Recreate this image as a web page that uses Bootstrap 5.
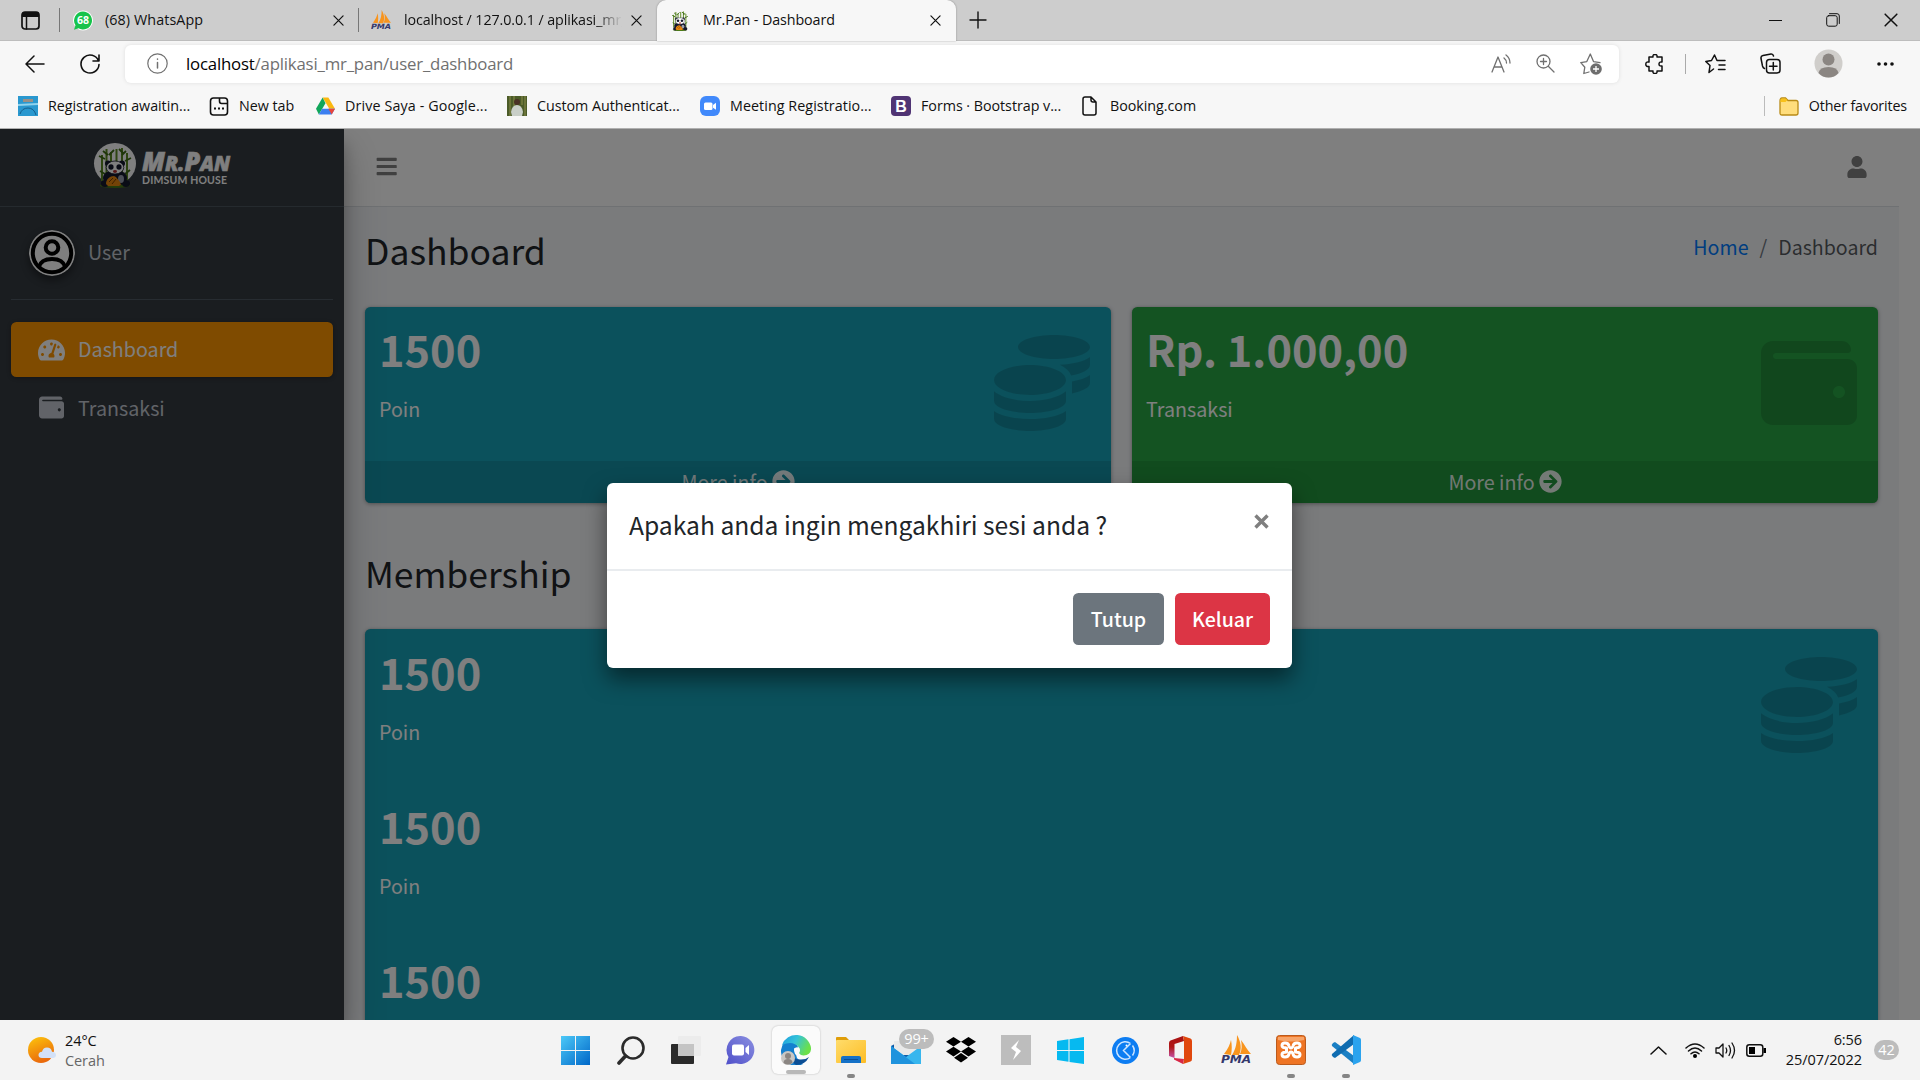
<!DOCTYPE html>
<html lang="id">
<head>
<meta charset="utf-8">
<title>Mr.Pan - Dashboard</title>
<link href="https://cdn.jsdelivr.net/npm/bootstrap@5.3.0/dist/css/bootstrap.min.css" rel="stylesheet">
<style>
html,body{height:100%}
body{width:1920px;height:1080px;overflow:hidden;font-family:"Noto Sans CJK SC","Noto Sans",sans-serif;font-size:19.7px;line-height:33px;color:#212529;background:#fff}
svg{display:block;flex:none}
.ui{font-family:"Open Sans","Noto Sans",sans-serif;color:#111}
.ln{fill:none;stroke:currentColor;stroke-linecap:round;stroke-linejoin:round}
/* browser frame */
.tabstrip{height:40px;background:#cdcdcd;font-size:14.3px;letter-spacing:-.1px}
.tabstrip .sep{width:1px;height:24px;background:#777}
.tab-item{height:40px;white-space:nowrap;overflow:hidden}
.tab-item span,.address>span{padding-bottom:2px}
.tab-live{background:#f7f7f7;border-radius:9px 9px 0 0;width:299px;box-shadow:0 0 2px rgba(0,0,0,.35);height:41px}
.fade-end{-webkit-mask-image:linear-gradient(90deg,#000 88%,transparent);mask-image:linear-gradient(90deg,#000 88%,transparent)}
.toolbar{height:48px;background:#f7f7f7;border-top:1px solid #bdbdbd;padding-bottom:2px}
.address{width:1494px;height:38px;background:#fff;border-radius:6px;box-shadow:0 0 4px rgba(0,0,0,.1);font-size:16.8px;letter-spacing:-.19px;color:#707070}
.favbar{height:41px;background:#f7f7f7;border-bottom:1px solid #b0b0b0;font-size:14.3px;letter-spacing:-.04px;white-space:nowrap}
.fav svg{margin-right:10px}
.fav span{padding-bottom:2px}
/* page */
.page{height:891px;overflow:hidden;background:#fff}
.side{width:344px;background:#343a40;color:#c2c7d0;box-shadow:0 19px 38px rgba(0,0,0,.25),0 14px 14px rgba(0,0,0,.22);z-index:2}
.side span{padding-bottom:2px}
.brand{height:78px;border-bottom:1px solid #4b545c}
.user-panel{margin:0 11px;height:93px;border-bottom:1px solid #4f5962}
.avatar{border-radius:50%;box-shadow:0 4px 8px rgba(0,0,0,.45)}
.side-link{margin:0 11px;height:55px;padding-left:27px;border-radius:5.5px;color:#c2c7d0}
.side-link.on{background:#ff9600;color:#fff;box-shadow:0 1px 4px rgba(0,0,0,.3)}
.main{width:1555px;background:#f4f6f9}
.topnav{height:78px;background:#fff;border-bottom:1px solid #dee2e6;padding:0 32px 2px}
.head-row{padding:21px 21px 31px}
.head-row h1{font-size:35.5px;line-height:44.5px;margin:0 0 3px;font-weight:400}
.crumb{--bs-breadcrumb-divider-color:#6c757d;--bs-breadcrumb-item-padding-x:11px;margin:2px 0 0;font-size:19.6px}
.crumb a{color:#007bff;text-decoration:none}
.tiles{padding:0 21px;gap:21px}
.box{border-radius:5.5px;color:#fff;box-shadow:0 0 1px rgba(0,0,0,.13),0 1px 4px rgba(0,0,0,.35);overflow:hidden;margin-bottom:27px}
.box.info{background:#17a2b8}.box.good{background:#28a745}
.box .inner{padding:13.75px 14px;height:154px}
.box h3{font-size:43.3px;line-height:56.5px;margin:0 0 15.25px;font-weight:700}
.box p{margin:0;line-height:33px}
.pic{position:absolute;right:21px;top:28px;fill:rgba(0,0,0,.15)}
.more{height:42px;background:rgba(0,0,0,.1);color:rgba(255,255,255,.9)}
.shade{position:absolute;inset:0;background:rgba(0,0,0,.5);z-index:5}
.dlg{position:absolute;left:607px;top:354px;width:685px;z-index:6}
.dlg .modal-content{height:185px;border:0;border-radius:6px;background:#fff;box-shadow:0 11px 22px rgba(0,0,0,.5);color:#212529}
.dlg .modal-header{height:88px;padding:21px 22px;border-bottom:2px solid #e9ecef}
.dlg .modal-title{font-size:24.65px;line-height:40px;font-weight:400}
.dlg .btn{font-size:19.6px;line-height:33px;height:52px;padding:9px 0 10px;border-radius:5.5px;border:0;font-weight:500;margin:0}
.dlg .btn-secondary{background:#6c757d}.dlg .btn-danger{background:#dc3545}
.dlg .modal-footer{border:0;padding:22px;gap:11px}
/* taskbar */
.taskbar{height:60px;background:#f3f3f3;font-size:14.5px;line-height:20px;letter-spacing:-.08px}
.cell{width:55px;height:60px}
.tile{width:48px;height:48px;background:#fbfbfb;border-radius:6px;box-shadow:0 0 2px rgba(0,0,0,.25)}
.run{position:absolute;left:50%;bottom:2px;height:4px;border-radius:2px;transform:translateX(-50%);background:#858585;width:8px}
.pill{background:#bcbcbc;color:#fff;border-radius:10px;height:20px;line-height:20px;text-align:center}
</style>
<script src="https://cdn.jsdelivr.net/npm/bootstrap@5.3.0/dist/js/bootstrap.bundle.min.js"></script>
</head>
<body class="d-flex flex-column">
<svg width="0" height="0" class="position-absolute">
 <defs>
  <linearGradient id="gBlue" x1="0" y1="0" x2="1" y2="1"><stop offset="0" stop-color="#4cc9f8"/><stop offset="1" stop-color="#0067c8"/></linearGradient>
  <linearGradient id="gSun" x1="0" y1="0" x2=".4" y2="1"><stop offset="0" stop-color="#fdc60c"/><stop offset="1" stop-color="#ea6a0c"/></linearGradient>
  <linearGradient id="gChat" x1="0" y1="1" x2="1" y2="0"><stop offset="0" stop-color="#4f4fc9"/><stop offset="1" stop-color="#8a8fe0"/></linearGradient>
  <linearGradient id="gEdge" x1="0" y1="0" x2="1" y2=".4"><stop offset="0" stop-color="#1a9be0"/><stop offset=".5" stop-color="#35c3d9"/><stop offset="1" stop-color="#6be04a"/></linearGradient>
  <linearGradient id="gFold" x1="0" y1="0" x2="1" y2="1"><stop offset="0" stop-color="#ffdc6b"/><stop offset="1" stop-color="#fdbd25"/></linearGradient>
  <linearGradient id="gOff" x1="0" y1="1" x2="0" y2="0"><stop offset="0" stop-color="#c452a8"/><stop offset=".5" stop-color="#b01818"/><stop offset="1" stop-color="#a81212"/></linearGradient>
  <symbol id="coins" viewBox="0 0 512 512"><path d="M0 405.3V448c0 35.3 86 64 192 64s192-28.700 192-64v-42.700C342.700 434.400 267.200 448 192 448S41.300 434.400 0 405.300zM320 128c106 0 192-28.700 192-64S426 0 320 0 128 28.700 128 64s86 64 192 64zM0 300.400V352c0 35.300 86 64 192 64s192-28.700 192-64v-51.600c-41.300 34-116.900 51.600-192 51.600S41.300 334.400 0 300.400zm416 11c57.300-11.100 96-31.700 96-55.400v-42.700c-23.200 16.400-57.300 27.600-96 34.500v63.600zM192 160C86 160 0 195.800 0 240s86 80 192 80 192-35.800 192-80-86-80-192-80zm219.300 56.300c60-10.800 100.700-32 100.700-56.300v-42.700c-35.500 25.100-96.500 38.600-160.700 41.800 29.500 14.300 51.200 33.500 60 57.200z"/></symbol>
  <symbol id="wallet" viewBox="0 0 512 512"><path d="M461.2 128H80c-8.840 0-16-7.160-16-16s7.160-16 16-16h384c8.840 0 16-7.160 16-16 0-26.510-21.490-48-48-48H64C28.650 32 0 60.650 0 96v320c0 35.350 28.650 64 64 64h397.200c28.020 0 50.800-21.530 50.800-48V176c0-26.470-22.780-48-50.800-48zM416 336c-17.670 0-32-14.330-32-32s14.330-32 32-32 32 14.330 32 32-14.330 32-32 32z"/></symbol>
  <symbol id="arrow" viewBox="0 0 512 512"><path d="M256 8c137 0 248 111 248 248S393 504 256 504 8 393 8 256 119 8 256 8zm-28.900 143.600l75.500 72.400H120c-13.300 0-24 10.700-24 24v16c0 13.300 10.700 24 24 24h182.600l-75.500 72.400c-9.700 9.300-9.900 24.800-.4 34.300l11 10.900c9.400 9.400 24.600 9.400 33.900 0L404.300 273c9.400-9.400 9.400-24.600 0-33.900L271.600 106.300c-9.400-9.400-24.600-9.400-33.900 0l-11 10.900c-9.500 9.600-9.300 25.100.4 34.400z"/></symbol>
  <symbol id="close" viewBox="0 0 12 12"><path class="ln" stroke-width="1.300" d="M1 1l10 10M11 1L1 11"/></symbol>
  <symbol id="panda" viewBox="0 0 42 45">
   <path d="M8 12v26M12.500 6v32M17 9v30M22.500 6v30M28 5v34M33 10v28" stroke="#5d8a22" stroke-width="2"/>
   <path d="M5 13l6 3M9 8l5 4M20 7l-5 5M25 6l5 5M37 15l-6 3M32 8l-4 4M6 28l5 3M36 27l-5 4" stroke="#3f6d14" stroke-width="1.800"/>
   <ellipse cx="21" cy="42.500" rx="15" ry="2.500" fill="#4c7a17"/>
   <ellipse cx="21" cy="35" rx="12" ry="8" fill="#15182c"/>
   <ellipse cx="11" cy="40.500" rx="4" ry="3.500" fill="#15182c"/><ellipse cx="32" cy="40.500" rx="4" ry="3.500" fill="#15182c"/>
   <circle cx="14" cy="20.500" r="3" fill="#15182c"/><circle cx="28" cy="20.500" r="3" fill="#15182c"/>
   <ellipse cx="21" cy="24.500" rx="8.800" ry="6.500" fill="#fff" stroke="#15182c" stroke-width=".8"/>
   <ellipse cx="17" cy="24" rx="2.600" ry="2.800" fill="#15182c"/><ellipse cx="25" cy="24" rx="2.600" ry="2.800" fill="#15182c"/>
   <ellipse cx="21" cy="28.500" rx="2" ry="1.400" fill="#b03030"/>
   <ellipse cx="27" cy="36" rx="3" ry="4" fill="#9aa0b0"/>
   <path d="M12 41c0-5 4-8 8-8 3 1 4 4 6 6l1 3-2 1H14z" fill="#e8870f"/><path d="M15 39l4-4M18 41l4-5" stroke="#7b3f00"/>
  </symbol>
  <symbol id="pma" viewBox="0 0 30 30"><path d="M3 19C7 14 9 9 10 5c1 5 1 10 0 15zM11 20c4-6 5-13 5-20 4 7 5 14 2 20zM19 19c2-4 2-9 1-14 4 5 6 10 10 14z" fill="#f8941d"/><text x="0" y="28" textLength="30" lengthAdjust="spacingAndGlyphs" font-family="DejaVu Sans" font-weight="700" font-style="italic" font-size="11" fill="#34386b">PMA</text></symbol>
 </defs>
</svg>

<header class="ui">
 <div class="tabstrip d-flex align-items-center">
  <svg width="19" height="19" viewBox="0 0 19 19" style="margin-left:21px"><rect class="ln" x="1" y="1" width="17" height="17" rx="3" stroke-width="1.700"/><path d="M1 3q0-2 2-2h13q2 0 2 2v3H1z" fill="#111"/><path d="M5.500 6v12" class="ln" stroke-width="1.500"/></svg>
  <span class="sep" style="margin-left:19px"></span>
  <div class="tab-item d-flex align-items-center" style="width:298px;padding-left:13px">
   <svg width="20" height="21" viewBox="0 0 20 21"><circle cx="10" cy="10.500" r="10" fill="#fff"/><path d="M10 1.500a9 9 0 1 1-4.500 16.800L1 19.800l1.500-4.500A9 9 0 0 1 10 1.500z" fill="#17c34b"/><text x="10" y="14.200" text-anchor="middle" font-family="Open Sans" font-weight="700" font-size="10.500" fill="#fff">68</text></svg>
   <span class="flex-grow-1" style="padding-left:12px;letter-spacing:.1px">(68) WhatsApp</span>
   <svg width="11" height="11" style="margin-right:14px"><use href="#close"/></svg>
  </div>
  <span class="sep"></span>
  <div class="tab-item d-flex align-items-center" style="width:298px;padding-left:12px">
   <svg width="20" height="20"><use href="#pma"/></svg>
   <span class="fade-end overflow-hidden" style="margin-left:13px;width:218px">localhost / 127.0.0.1 / aplikasi_mr_pan</span>
   <svg width="11" height="11" style="margin-left:9px"><use href="#close"/></svg>
  </div>
  <div class="tab-live tab-item d-flex align-items-center">
   <svg width="18" height="21" viewBox="4 2 34 43" style="margin-left:14px"><use href="#panda" width="42" height="45"/></svg>
   <span class="flex-grow-1" style="padding-left:14px">Mr.Pan - Dashboard</span>
   <svg width="11" height="11" style="margin-right:15px"><use href="#close"/></svg>
  </div>
  <svg width="18" height="18" style="margin-left:13px" viewBox="0 0 18 18"><path class="ln" stroke-width="1.400" d="M9 1v16M1 9h16"/></svg>
  <div class="d-flex align-items-center ms-auto" style="gap:44px;margin-right:22px">
   <svg width="13" height="13"><path d="M0 6.500h13" stroke="#111"/></svg>
   <svg width="14" height="14" viewBox="0 0 14 14"><rect class="ln" x=".7" y="2.700" width="10.500" height="10.500" rx="2"/><path class="ln" d="M3.500.7H11q2.300 0 2.300 2.300v7.500"/></svg>
   <svg width="14" height="14"><use href="#close"/></svg>
  </div>
 </div>
 <div class="toolbar d-flex align-items-center">
  <svg width="20" height="18" viewBox="0 0 20 18" style="margin-left:25px"><path class="ln" stroke-width="1.500" d="M19 9H1M9 1L1 9l8 8"/></svg>
  <svg width="20" height="21" viewBox="0 0 20 21" style="margin:0 25px 0 35px"><path class="ln" stroke-width="1.600" d="M18.500 8A9 9 0 1 0 19 11.500M19 2v6h-6"/></svg>
  <div class="address d-flex align-items-center">
   <svg width="21" height="21" viewBox="0 0 21 21" style="margin:0 18px 0 22px"><circle class="ln" cx="10.500" cy="10.500" r="9.700" stroke-width="1.200"/><path class="ln" stroke-width="1.500" d="M10.500 9.500v5.500M10.500 6v.2"/></svg>
   <span style="padding-bottom:1px"><span class="text-black">localhost</span>/aplikasi_mr_pan/user_dashboard</span>
   <div class="d-flex align-items-center ms-auto" style="gap:25px;margin-right:17px">
    <svg width="20" height="20" viewBox="0 0 20 20"><path class="ln" stroke-width="1.300" d="M1 18L7 3l6 15M3.200 13h7.600M13 4q2.500 2 2.500 5M15 1q4 3 4 8"/></svg>
    <svg width="19" height="19" viewBox="0 0 19 19"><path class="ln" stroke-width="1.300" d="M12.500 12.500l5.500 5.500M7.500 4.500v6M4.500 7.500h6"/><circle class="ln" cx="7.500" cy="7.500" r="6.500" stroke-width="1.300"/></svg>
    <svg width="22" height="22" viewBox="0 0 22 22"><path class="ln" stroke-width="1.300" d="M9 19l-5.200 1.500 1-6.300L.8 9.600l6-1L10.300 1l3.200 7.600 6.500 1"/><circle cx="16" cy="16" r="5.800" fill="#6d6d6d"/><path d="M16 13v6M13 16h6" stroke="#fff" stroke-width="1.300"/></svg>
   </div>
  </div>
  <svg width="20" height="20" viewBox="0 0 20 20" style="margin-left:26px"><path class="ln" stroke-width="1.500" d="M4 3h4q-.5-2.500 2-2.500T12 3h5v5q-3-.5-3 2t3 2v5h-5q.5 2.500-2 2.500T8 17H4v-4.500Q.8 13 .8 10.200T4 8z"/></svg>
  <svg width="1" height="20" style="margin:0 19px 0 20px"><path d="M.5 0v20" stroke="#aaa"/></svg>
  <svg width="21" height="20" viewBox="0 0 21 20"><path class="ln" stroke-width="1.500" d="M8.500 15L4 18.500l1-7L.8 7.500l5.700-1L9.500 1l2.500 5.500h8M14 11h6M13.500 15.500H20"/></svg>
  <svg width="21" height="21" viewBox="0 0 21 21" style="margin-left:34px"><rect class="ln" x="6.500" y="6.500" width="13.500" height="13.500" rx="3" stroke-width="1.500"/><path class="ln" stroke-width="1.500" d="M13.300 9.500v7.500M9.500 13.300H17M4.500 15.500Q3 15 2.500 13L1 5.500Q.6 3 3 2.500L11 1q2-.2 2.500 2"/></svg>
  <svg width="29" height="29" viewBox="0 0 29 29" style="margin-left:33px"><circle cx="14.500" cy="14.500" r="14" fill="#d0cecb"/><circle cx="14.500" cy="10.500" r="6" fill="#8b8682"/><path d="M4.500 24q1-6 10-6t10 6q-4 4.500-10 4.500T4.500 24z" fill="#8b8682"/></svg>
  <svg width="17" height="4" style="margin-left:34px"><g fill="#111"><circle cx="2" cy="2" r="1.800"/><circle cx="8.500" cy="2" r="1.800"/><circle cx="15" cy="2" r="1.800"/></g></svg>
 </div>
 <div class="favbar d-flex align-items-center" style="padding:0 13px 4px 18px">
  <div class="fav d-flex align-items-center" style="width:191px"><svg width="20" height="20"><path fill="#2a98cf" d="M0 0h20v20H0z"/><path fill="#9a8f86" d="M5 3h10v3H5z"/><path d="M0 8l20-1v2L0 10z" fill="#8fd3ee"/><path d="M2 18q2-6 8-6t8 7" stroke="#145f8d" fill="none"/></svg><span>Registration awaitin...</span></div>
  <div class="fav d-flex align-items-center" style="width:107px"><svg width="20" height="19" viewBox="0 0 19 19"><path class="ln" stroke-width="1.600" d="M10 1H4Q1 1 1 4v11q0 3 3 3h11q3 0 3-3V6.500h-6Q10 6.500 10 4zM10 1h5q3 0 3 3v3"/><path d="M4.500 11.500h2M8.500 11.500h2M12.500 11.500h2" stroke="#111" stroke-width="2"/></svg><span>New tab</span></div>
  <div class="fav d-flex align-items-center" style="width:191px;letter-spacing:.12px"><svg width="19" height="18" viewBox="0 0 20 18"><path d="M7 0h6l7 12h-6z" fill="#fbb80f"/><path d="M7 0l3 6-7 12-3-6z" fill="#11a65a"/><path d="M3 18l3.500-6H20l-3.500 6z" fill="#3c7ff0"/><path d="M20 12l-3.500 6-3.500-6z" fill="#e8453c"/></svg><span>Drive Saya - Google...</span></div>
  <div class="fav d-flex align-items-center" style="width:193px"><svg width="20" height="20"><path fill="#4b5b28" d="M0 0h20v20H0z"/><path d="M3 0v20M7 0v10M15 0v9M18 0v20" stroke="#8b8d4a"/><circle cx="10" cy="6" r="3" fill="#4a3226"/><path d="M4 16q1-7 6-7t6 7l-1 4H5z" fill="#c9cfc8"/></svg><span>Custom Authenticat...</span></div>
  <div class="fav d-flex align-items-center" style="width:191px;letter-spacing:.06px"><svg width="20" height="20"><rect width="20" height="20" rx="6" fill="#4189fb"/><rect x="4" y="6.500" width="8.500" height="7.500" rx="1.500" fill="#fff"/><path d="M13 9l3-2.300v7L13 11.700z" fill="#fff"/></svg><span>Meeting Registratio...</span></div>
  <div class="fav d-flex align-items-center" style="width:191px"><svg width="20" height="20"><rect width="20" height="20" rx="4" fill="#503474"/><text x="10" y="15.500" text-anchor="middle" font-family="Liberation Sans" font-weight="700" font-size="16" fill="#fff">B</text></svg><span>Forms · Bootstrap v...</span></div>
  <div class="fav d-flex align-items-center"><svg width="15" height="20" viewBox="0 0 15 20" style="margin-right:13px"><path class="ln" stroke-width="1.500" d="M9 1H3Q1 1 1 3v14q0 2 2 2h9q2 0 2-2V6zv3q0 2 2 2h3"/></svg><span>Booking.com</span></div>
  <div class="fav d-flex align-items-center ms-auto" style="letter-spacing:-.15px"><svg width="2" height="20" style="margin-right:13px"><path d="M.5 0v20" stroke="#bbb"/></svg><svg width="20" height="19" viewBox="0 0 20 19"><path d="M1 4Q1 1 3 1h3.500L9 3.500h8q2 0 2 2V16q0 2-2 2H3q-2 0-2-2z" fill="#ffdd7c" stroke="#b98b16" stroke-width="1.300"/><path d="M1.500 5V3Q1.500 1.500 3 1.500h3.500L8.500 3 6.500 5z" fill="#f8c11b"/></svg><span>Other favorites</span></div>
 </div>
</header>

<div class="page d-flex position-relative">
 <aside class="side d-flex flex-column">
  <div class="brand">
   <svg width="344" height="77" viewBox="0 0 344 77"><ellipse cx="115" cy="34.500" rx="21" ry="20.500" fill="#fff"/><use href="#panda" x="94" y="14" width="42" height="45"/><g font-family="Open Sans" fill="#fff"><text x="142" y="42" font-size="26" font-weight="800" font-style="italic" stroke="#fff" stroke-width=".6" textLength="88" lengthAdjust="spacingAndGlyphs">M<tspan font-size="21">R.</tspan>P<tspan font-size="21">AN</tspan></text><text x="142" y="55" font-family="Lato" font-size="10.500" font-weight="700" textLength="85" lengthAdjust="spacing">DIMSUM HOUSE</text></g></svg>
  </div>
  <div class="user-panel d-flex align-items-center" style="padding:0 0 1px 18px"><svg class="avatar" width="46" height="46" viewBox="0 0 46 46"><circle cx="23" cy="23" r="23" fill="#fff"/><g fill="none" stroke="#000" stroke-width="4"><circle cx="23" cy="23" r="19.200"/><circle cx="23" cy="17.500" r="6.300"/><path d="M10 37q2-8 13-8t13 8"/></g></svg><span style="padding-left:13px;padding-bottom:3px">User</span></div>
  <div class="side-link on d-flex align-items-center" style="margin-top:22px"><svg width="27" height="24" viewBox="0 0 576 512" fill="currentColor"><path d="M288 32C128.940 32 0 160.940 0 320c0 52.800 14.250 102.260 39.060 144.800 5.610 9.620 16.300 15.200 27.440 15.200h443c11.140 0 21.830-5.580 27.440-15.200C561.750 422.260 576 372.800 576 320c0-159.060-128.940-288-288-288zm0 64c14.710 0 26.580 10.130 30.320 23.650-1.110 2.260-2.640 4.230-3.450 6.670l-9.220 27.670c-5.130 3.490-10.970 6.010-17.640 6.010-17.670 0-32-14.330-32-32S270.330 96 288 96zM96 384c-17.670 0-32-14.330-32-32s14.330-32 32-32 32 14.330 32 32-14.330 32-32 32zm48-160c-17.670 0-32-14.330-32-32s14.330-32 32-32 32 14.330 32 32-14.330 32-32 32zm246.770-72.410l-61.330 184C343.130 347.330 352 364.540 352 384c0 11.720-3.380 22.550-8.880 32H232.880c-5.500-9.450-8.880-20.280-8.880-32 0-33.940 26.500-61.430 59.900-63.590l61.340-184.010c4.170-12.560 17.730-19.450 30.360-15.170 12.570 4.190 19.350 17.790 15.170 30.360zm14.660 57.200l15.520-46.550c3.470-1.290 7.130-2.230 11.050-2.230 17.670 0 32 14.330 32 32s-14.330 32-32 32c-11.380-.01-20.890-6.280-26.570-15.220zM480 384c-17.670 0-32-14.330-32-32s14.330-32 32-32 32 14.330 32 32-14.330 32-32 32z"/></svg><span style="padding-left:13px">Dashboard</span></div>
  <div class="side-link d-flex align-items-center" style="margin-top:4px;padding-bottom:2px"><svg width="25" height="25" fill="currentColor" style="margin:0 1px"><use href="#wallet"/></svg><span style="padding-left:13px;padding-bottom:0">Transaksi</span></div>
 </aside>

 <main class="main">
  <nav class="topnav d-flex align-items-center justify-content-between">
   <svg width="21" height="23" viewBox="-8 0 456 512" fill="#808080"><path d="M16 132h416c9 0 16-7 16-16V76c0-9-7-16-16-16H16C7 60 0 67 0 76v40c0 9 7 16 16 16zm0 160h416c9 0 16-7 16-16v-40c0-9-7-16-16-16H16c-9 0-16 7-16 16v40c0 9 7 16 16 16zm0 160h416c9 0 16-7 16-16v-40c0-9-7-16-16-16H16c-9 0-16 7-16 16v40c0 9 7 16 16 16z"/></svg>
   <svg width="20" height="22" viewBox="0 0 448 512" fill="#808080"><path d="M224 256c70.700 0 128-57.300 128-128S294.700 0 224 0 96 57.300 96 128s57.300 128 128 128zm89.600 32h-16.700c-22.200 10.200-46.900 16-72.900 16s-50.600-5.800-72.900-16h-16.700C60.200 288 0 348.200 0 422.400V464c0 26.500 21.500 48 48 48h352c26.500 0 48-21.500 48-48v-41.600c0-74.200-60.200-134.400-134.400-134.400z"/></svg>
  </nav>
  <div class="head-row d-flex justify-content-between">
   <h1>Dashboard</h1>
   <ol class="breadcrumb crumb"><li class="breadcrumb-item"><a href="#">Home</a></li><li class="breadcrumb-item active">Dashboard</li></ol>
  </div>
  <div class="tiles d-flex">
   <section class="box info position-relative flex-fill w-50"><div class="inner"><h3>1500</h3><p>Poin</p></div><svg class="pic" width="96" height="96"><use href="#coins"/></svg><div class="more d-flex align-items-center justify-content-center">More info<svg width="23" height="23" fill="currentColor" style="margin-left:4px"><use href="#arrow"/></svg></div></section>
   <section class="box good position-relative flex-fill w-50"><div class="inner"><h3>Rp. 1.000,00</h3><p>Transaksi</p></div><svg class="pic" width="96" height="96"><use href="#wallet"/></svg><div class="more d-flex align-items-center justify-content-center">More info<svg width="23" height="23" fill="currentColor" style="margin-left:4px"><use href="#arrow"/></svg></div></section>
  </div>
  <div class="head-row"><h1>Membership</h1></div>
  <div class="tiles">
   <section class="box info position-relative"><div class="inner"><h3>1500</h3><p>Poin</p></div><div class="inner"><h3>1500</h3><p>Poin</p></div><div class="inner"><h3>1500</h3></div><svg class="pic" width="96" height="96"><use href="#coins"/></svg></section>
  </div>
 </main>
 <div class="shade"></div>
 <div class="dlg">
  <div class="modal-content">
   <div class="modal-header align-items-start"><h4 class="modal-title">Apakah anda ingin mengakhiri sesi anda ?</h4><svg width="15" height="15" viewBox="0 0 15 15" style="margin:10px 1px 0 0"><path d="M1.500 1.500l12 12M13.500 1.500l-12 12" stroke="#7f7f7f" stroke-width="3.400"/></svg></div>
   <div class="modal-footer flex-nowrap"><button class="btn btn-secondary" style="width:91px">Tutup</button><button class="btn btn-danger" style="width:95px">Keluar</button></div>
  </div>
 </div>
</div>

<footer class="taskbar ui d-flex align-items-center">
 <div class="d-flex align-items-center" style="width:548px;padding-left:28px">
  <svg width="29" height="27" viewBox="0 0 29 27"><circle cx="13" cy="13" r="13" fill="url(#gSun)"/><path d="M14 21q-3.500 0-3.500-3t3.500-3.200Q15 10.500 19 10.500t5 4.200q4 .3 4 3.300t-3.500 3z" fill="#d3e1f7"/></svg>
  <div style="padding:1px 0 0 8px">24°C<br><span style="color:#666">Cerah</span></div>
 </div>
 <div class="cell d-flex align-items-center justify-content-center"><svg width="29" height="29"><path d="M0 0h14v14H0zM15 0h14v14H15zM0 15h14v14H0zM15 15h14v14H15z" fill="url(#gBlue)"/></svg></div>
 <div class="cell d-flex align-items-center justify-content-center"><svg width="28" height="29" viewBox="0 0 28 29"><circle cx="16" cy="12" r="10.500" fill="none" stroke="#2b2b2b" stroke-width="2.600"/><path d="M8.500 20L2 27" stroke="#2b2b2b" stroke-width="3.600" stroke-linecap="round"/></svg></div>
 <div class="cell d-flex align-items-center justify-content-center"><svg width="30" height="28"><rect y="8" width="23" height="20" rx="1" fill="#2a2a2a"/><rect x="7" width="23" height="20" rx="1" fill="#ececec"/><path d="M7 8h16v12H7z" fill="#c4c4c4"/></svg></div>
 <div class="cell d-flex align-items-center justify-content-center"><svg width="29" height="29"><path d="M15 0a14 14 0 1 1-5 27.300L0 28.500 2.500 21A14 14 0 0 1 15 0z" fill="url(#gChat)"/><rect x="6" y="8.500" width="12" height="11" rx="2" fill="#fff"/><path d="M19.500 12l3.500-3v10l-3.500-3z" fill="#fff"/></svg></div>
 <div class="cell d-flex align-items-center justify-content-center"><div class="tile d-flex align-items-center justify-content-center position-relative"><svg width="30" height="30" viewBox="0 0 30 30"><path d="M0 15A15 15 0 0 1 12 2l6 12q-4 4-2 9l6 6A15 15 0 0 1 0 15z" fill="#1480cf"/><path d="M1 10A15 15 0 0 1 30 13q.5 7-7.500 7.500-5 0-4.500-2.500 2-3 0-5.500Q12 5 1 10z" fill="url(#gEdge)"/><path d="M11 15q-1 10 9 9.500 5 0 8-2.500-4 8-13 8-6-3-4-15z" fill="#0c4f95"/><path d="M13 13.500q5-3 5.500 1-2 5 4 6.500-2 1.500-5 .5-5-2-4.500-8z" fill="#fbfbfb"/><circle cx="7" cy="23" r="7" fill="#c9c7c4"/><circle cx="7" cy="21" r="3" fill="#8b8682"/><path d="M2.500 28q0-4 4.500-4t4.500 4q-4.500 3-9 0z" fill="#8b8682"/></svg><i class="run" style="width:20px;background:#b8b8b8;bottom:0"></i></div></div>
 <div class="cell d-flex align-items-center justify-content-center position-relative"><svg width="30" height="27"><path d="M0 1q0-1 1-1h9l3 3v6H0z" fill="#df9d09"/><rect y="3" width="30" height="23" rx="1" fill="url(#gFold)"/><path d="M5 26v-5q0-2 2-2h16q2 0 2 2v5z" fill="#1571c7"/><path d="M8 22.500h14" stroke="#0a4f96"/></svg><i class="run"></i></div>
 <div class="cell d-flex align-items-center justify-content-center position-relative"><svg width="30" height="26" style="margin-top:2px"><path d="M0 8L15 0l15 8v18H0z" fill="#0f5aa6"/><path d="M3 3h24v14H3z" fill="#e9e9e9"/><path d="M0 8l15 11L30 8v18H0z" fill="#37b6ee"/><path d="M0 26V8l24 18z" fill="#1f93dd"/></svg><span class="pill position-absolute" style="left:21px;top:9px;width:35px;z-index:2">99+</span></div>
 <div class="cell d-flex align-items-center justify-content-center"><svg width="30" height="26" viewBox="0 0 30 26"><path d="M7.500 0L15 4.800 7.500 9.600 0 4.800zM22.500 0L30 4.800l-7.500 4.800L15 4.800zM7.500 9.800L15 14.600 7.500 19.400 0 14.600zM22.500 9.800l7.500 4.800-7.500 4.800-7.500-4.800zM15 16l7 4.700L15 25.500l-7-4.800z"/></svg></div>
 <div class="cell d-flex align-items-center justify-content-center"><svg width="30" height="30"><path fill="#bdbdbd" d="M0 0h30v30H0z"/><path d="M18 5l-8 8 5 4-3 8 8-9-5-4z" fill="#fff"/></svg></div>
 <div class="cell d-flex align-items-center justify-content-center"><svg width="27" height="27"><path d="M0 4l11.500-1.700V13H0zM12.500 2.200L27 0v13H12.500zM0 14h11.500v10.700L0 23zM12.500 14H27v13l-14.500-2z" fill="#06b9f0"/></svg></div>
 <div class="cell d-flex align-items-center justify-content-center"><svg width="27" height="27"><circle cx="13.500" cy="13.500" r="13.500" fill="#0d7df2"/><g fill="none" stroke="#cfe6ff" stroke-width="1.500"><path d="M18.500 6.500A8.700 8.700 0 1 0 18.500 20.500M20.500 8.500a8.700 8.700 0 0 1 0 10M18.500 6.500l-7 7 7 7"/></g><circle cx="14.500" cy="8.500" r="1" fill="#fff"/></svg></div>
 <div class="cell d-flex align-items-center justify-content-center"><svg width="23" height="28" viewBox="0 0 23 28"><path d="M14 0L1.500 4.500Q0 5 0 7v13l5.500 2V8L15 5z" fill="url(#gOff)"/><path d="M14 0l7.500 2.500Q23 3 23 5v18q0 2-1.500 2.500L14 28l1-4V4z" fill="#e0470d"/><path d="M5 22l10 1-1 5-9-4.500z" fill="#d82746"/></svg></div>
 <div class="cell d-flex align-items-center justify-content-center"><svg width="30" height="30"><use href="#pma"/></svg></div>
 <div class="cell d-flex align-items-center justify-content-center position-relative"><svg width="30" height="30"><rect x=".5" y=".5" width="29" height="29" rx="3" fill="#ee7424" stroke="#bb5a1c"/><path d="M2 2h26v3q-13 3-26 0z" fill="#f7a468"/><path d="M9.500 12.800Q6 13 6 10.500T9 8q3.500 0 4 3 .5 2 2 2t2-2q.5-3 4-3 3 0 3 2.500t-3.500 2.300M9.500 17.200Q6 17 6 19.500T9 22q3.500 0 4-3 .5-2 2-2t2 2q.5 3 4 3 3 0 3-2.500t-3.500-2.300M10.500 13v4M19.500 13v4" fill="none" stroke="#fff" stroke-width="3" stroke-linecap="round" stroke-linejoin="round"/></svg><i class="run"></i></div>
 <div class="cell d-flex align-items-center justify-content-center position-relative"><svg width="30" height="30" viewBox="0 0 30 30"><path d="M2 8l2-1 19 14v8L1 11q-1-1 1-3z" fill="#1a7fc4"/><path d="M2 22l2 1L23 9V0L1 19q-1 1 1 3z" fill="#0f6cb0"/><path d="M22 0l7 3q1 .5 1 2v20q0 1.500-1 2l-7 3z" fill="#2ba3ee"/></svg><i class="run"></i></div>
 <div class="d-flex align-items-center ms-auto" style="padding-right:21px">
  <svg width="17" height="9" viewBox="0 0 17 9"><path class="ln" stroke-width="1.500" d="M1 8l7.500-7L16 8"/></svg>
  <svg width="20" height="15" viewBox="0 0 20 15" style="margin-left:18px"><path class="ln" stroke-width="1.500" d="M1 5q9-8 18 0M3.500 8q6.500-6 13 0M6 10.800q4-3.600 8 0"/><circle cx="10" cy="13" r="2"/></svg>
  <svg width="21" height="17" viewBox="0 0 21 17" style="margin-left:10px"><path class="ln" stroke-width="1.300" d="M1 6h3l4-4v13l-4-4H1zM11 6q1.500 2.500 0 5M14 3.500q3 5 0 10M17 1q5 7.500 0 15"/></svg>
  <svg width="20" height="13" viewBox="0 0 20 13" style="margin-left:10px"><rect class="ln" x=".8" y=".8" width="16" height="11.400" rx="2.500" stroke-width="1.500"/><path d="M3 3h6v7H3zM17.500 4h2.500v5h-2.500z"/></svg>
  <div class="text-end" style="width:96px">6:56<br>25/07/2022</div>
  <span class="pill" style="width:25px;margin-left:12px">42</span>
 </div>
</footer>
</body>
</html>
